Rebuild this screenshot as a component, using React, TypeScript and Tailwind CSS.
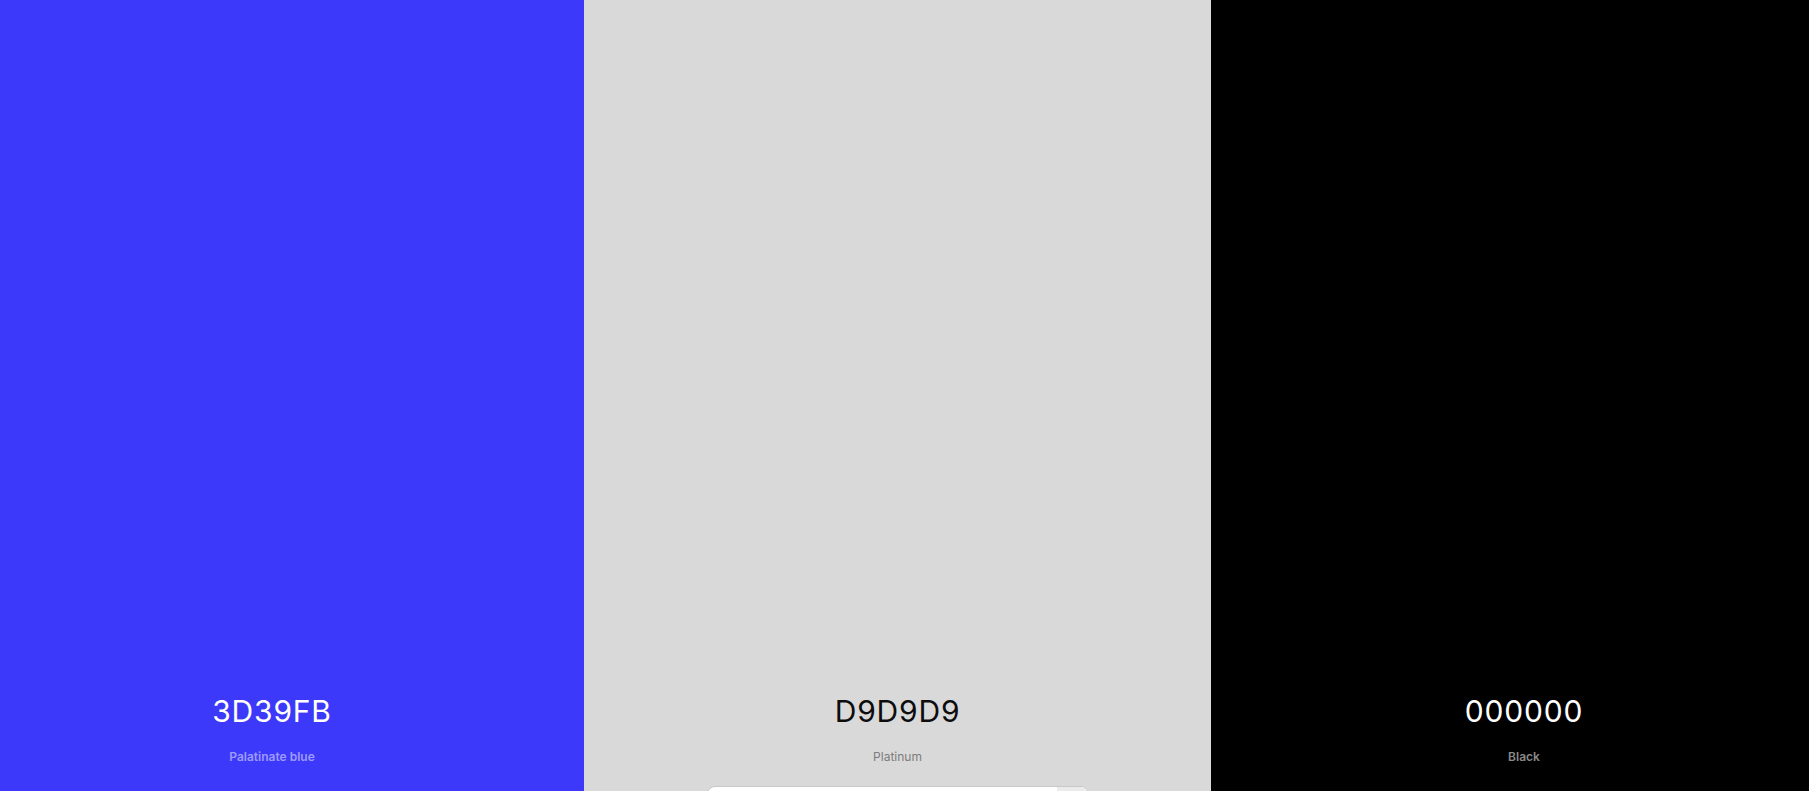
import React from 'react'

interface Swatch {
  hex: string
  name: string
  bg: string
  hexColor: string
  nameColor: string
  width: string
  pad: string
}

const swatches: Swatch[] = [
  {
    hex: '3D39FB',
    name: 'Palatinate blue',
    bg: 'bg-[#3d39fb]',
    hexColor: 'text-white',
    nameColor: 'text-[#9d9bfc] font-semibold',
    width: 'w-[584px]',
    pad: 'pr-[40px]',
  },
  {
    hex: 'D9D9D9',
    name: 'Platinum',
    bg: 'bg-[#d9d9d9]',
    hexColor: 'text-[#0d0d0d]',
    nameColor: 'text-[#7c7c7c] font-normal',
    width: 'w-[627px]',
    pad: '',
  },
  {
    hex: '000000',
    name: 'Black',
    bg: 'bg-black',
    hexColor: 'text-white',
    nameColor: 'text-[#8a8a8a] font-semibold',
    width: 'flex-1',
    pad: 'pl-[28px]',
  },
]

export default function App() {
  return (
    <div
      className="flex h-[791px] w-full overflow-hidden"
      style={{ fontFamily: 'Inter, "Noto Sans", sans-serif' }}
    >
      {swatches.map((s) => (
        <div
          key={s.hex}
          className={`relative flex h-full flex-col items-center justify-end pb-[26px] ${s.bg} ${s.width} ${s.pad}`}
        >
          <div className={`text-[30px] leading-[36px] font-normal tracking-[0.8px] ${s.hexColor}`}>
            {s.hex}
          </div>
          <div className={`mt-[20px] text-[12px] leading-[16px] ${s.nameColor}`}>{s.name}</div>

          {s.hex === 'D9D9D9' && (
            <div className="absolute bottom-[-40px] left-[123px] flex h-[45px] w-[382px] overflow-hidden rounded-[8px] border border-[#c8c8c8] bg-white">
              <div className="flex-1" />
              <div className="w-[31px] bg-[#ebebeb]" />
            </div>
          )}
        </div>
      ))}
    </div>
  )
}
